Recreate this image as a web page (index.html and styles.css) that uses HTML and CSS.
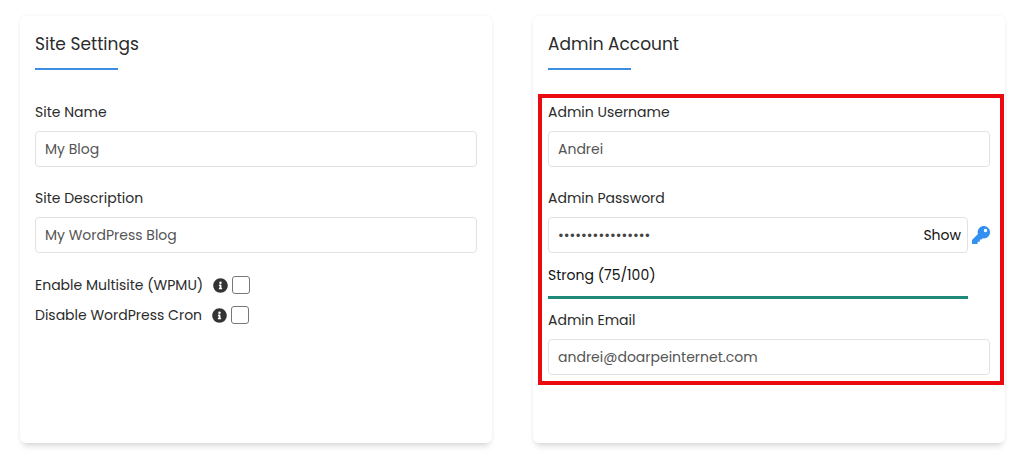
FILE: index.html
```html
<!DOCTYPE html>
<html lang="en">
<head>
    <meta charset="UTF-8">
    <meta name="viewport" content="width=device-width, initial-scale=1.0">
    <title>Install WordPress</title>
    <link rel="stylesheet" href="styles.css">
</head>
<body>
    <!-- Icons used more than once -->
    <svg class="sprite" aria-hidden="true">
        <symbol id="icon-info" viewBox="0 0 512 512">
            <path d="M256 8C119 8 8 119 8 256s111 248 248 248 248-111 248-248S393 8 256 8zm0 110a42 42 0 1 1 0 84 42 42 0 0 1 0-84zm56 254a12 12 0 0 1-12 12h-88a12 12 0 0 1-12-12v-24a12 12 0 0 1 12-12h12v-64h-12a12 12 0 0 1-12-12v-24a12 12 0 0 1 12-12h64a12 12 0 0 1 12 12v100h12a12 12 0 0 1 12 12v24z"/>
        </symbol>
    </svg>

    <form class="container">
        <section class="card">
            <h2 class="card-title">Site Settings</h2>

            <div class="field">
                <label for="site-name">Site Name</label>
                <input type="text" id="site-name" value="My Blog">
            </div>
            <div class="field">
                <label for="site-description">Site Description</label>
                <input type="text" id="site-description" value="My WordPress Blog">
            </div>

            <div class="check-row">
                <label for="multisite">Enable Multisite (WPMU)</label>
                <svg class="info-icon" aria-hidden="true"><use href="#icon-info"/></svg>
                <input type="checkbox" id="multisite">
            </div>
            <div class="check-row">
                <label for="cron">Disable WordPress Cron</label>
                <svg class="info-icon" aria-hidden="true"><use href="#icon-info"/></svg>
                <input type="checkbox" id="cron">
            </div>
        </section>

        <section class="card">
            <h2 class="card-title">Admin Account</h2>

            <div class="highlight">
                <div class="field">
                    <label for="username">Admin Username</label>
                    <input type="text" id="username" value="Andrei">
                </div>
                <div class="password-group">
                    <label for="password">Admin Password</label>
                    <div class="password-row">
                        <div class="password-box">
                            <input type="password" id="password" value="Wp4dmin!Secure#7">
                            <button type="button" class="show-button">Show</button>
                        </div>
                        <button type="button" class="key-button" aria-label="Generate password">
                            <svg viewBox="0 0 512 512" aria-hidden="true">
                                <path d="M512 176c0 97-79 176-176 176-11 0-22-1-33-3l-24 27a24 24 0 0 1-18 8h-37v40a24 24 0 0 1-24 24h-40v40a24 24 0 0 1-24 24H24a24 24 0 0 1-24-24v-78c0-6 3-12 7-17l162-162a176 176 0 1 1 343-55zm-176-48a48 48 0 1 0 96 0 48 48 0 0 0-96 0z"/>
                            </svg>
                        </button>
                    </div>
                    <p class="strength">Strong (75/100)</p>
                    <div class="strength-bar"></div>
                </div>
                <div class="field">
                    <label for="email">Admin Email</label>
                    <input type="email" id="email" value="andrei@doarpeinternet.com">
                </div>
            </div>
        </section>
    </form>
</body>
</html>
```
FILE: styles.css
```css
* {
    margin: 0;
    padding: 0;
    box-sizing: border-box;
}

body {
    font-family: Poppins, Inter, sans-serif;
    font-size: 14px;
    line-height: 24px;
    background-color: #fff;
    color: #2b2b2b;
}

input, button {
    font-family: inherit;
    font-size: inherit;
}

.sprite {
    display: none;
}

.container {
    display: grid;
    grid-template-columns: 1fr 1fr;
    gap: 41px;
    padding: 16px 19px 16px 20px;
}

.card {
    padding: 16px 15px 68px;
    border-radius: 6px;
    background-color: #fff;
    box-shadow: 0 0 4px rgba(0, 0, 0, 0.06), 0 6px 6px -3px rgba(0, 0, 0, 0.14);
}

.card-title {
    margin-bottom: 30px;
    font-size: 17px;
    font-weight: 400;
}

/* Short blue line under the title */
.card-title::after {
    content: "";
    display: block;
    width: 83px;
    height: 2px;
    margin-top: 12px;
    background-color: #3d8de0;
}

.field {
    margin-bottom: 19px;
}

.field label, .password-group label {
    display: block;
    margin-bottom: 7px;
}

.field input, .password-box {
    width: 100%;
    height: 36px;
    border: 1px solid #e2e2e2;
    border-radius: 4px;
    background-color: #fff;
}

.field input {
    display: block;
    padding: 0 9px;
    color: #555;
}

.check-row {
    display: flex;
    align-items: center;
    height: 26px;
    margin-bottom: 4px;
}

.info-icon {
    width: 15px;
    height: 15px;
    margin: 0 4px 0 10px;
    fill: #333;
}

.check-row input {
    appearance: none;
    width: 18px;
    height: 18px;
    border: 1px solid #777;
    border-radius: 3px;
    background-color: #fff;
}

.check-row input:checked {
    background-color: #3490f0;
}

/* Red frame around the admin fields */
.highlight {
    position: relative;
}

.highlight::after {
    content: "";
    position: absolute;
    inset: -6px -14px -10px -10px;
    border: 4px solid #ea0a0f;
    pointer-events: none;
}

.highlight .field:last-child {
    margin-bottom: 0;
}

.password-group {
    margin-bottom: 9px;
}

.password-row {
    display: flex;
    align-items: center;
}

.password-box {
    display: flex;
    flex: 1;
    padding: 0 6px 0 9px;
}

.password-box input {
    flex: 1;
    min-width: 0;
    border: none;
    background: transparent;
    color: #444;
}

.show-button {
    border: none;
    background: transparent;
    color: #111;
    cursor: pointer;
}

.key-button {
    width: 18px;
    height: 18px;
    margin-left: 4px;
    border: none;
    background: transparent;
    cursor: pointer;
}

.key-button svg {
    display: block;
    width: 18px;
    height: 18px;
    fill: #3490f0;
}

.strength {
    margin-top: 10px;
    color: #111;
}

.strength-bar {
    height: 3px;
    margin: 9px 22px 0 0;
    background-color: #1f8a78;
}
```
